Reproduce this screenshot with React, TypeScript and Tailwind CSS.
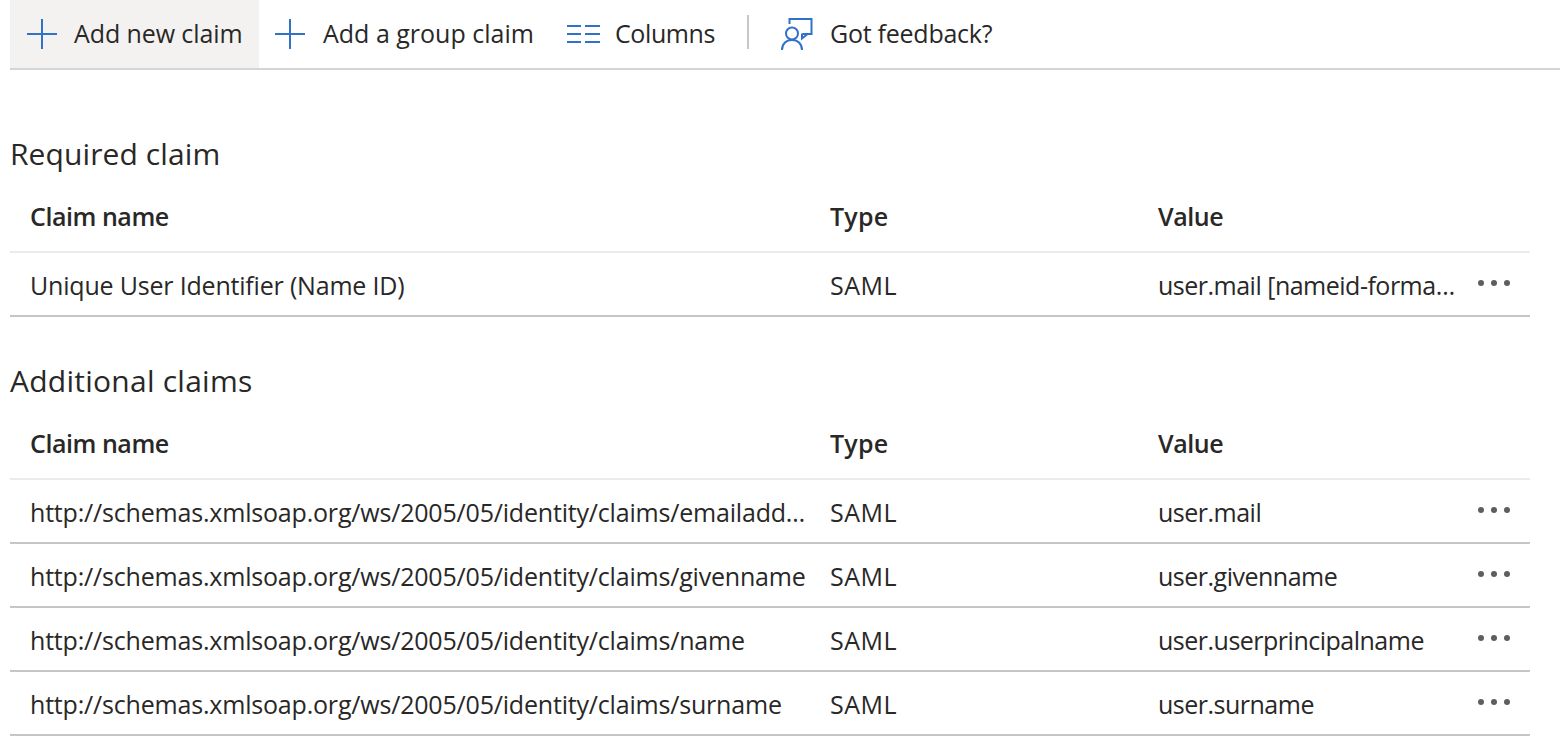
const font = { fontFamily: '"Open Sans", sans-serif' };

function Plus() {
  return (
    <svg width="30" height="30" viewBox="0 0 30 30" className="shrink-0">
      <path d="M0 15h30M15 0v30" stroke="#2f72c8" strokeWidth="2" fill="none" />
    </svg>
  );
}

function ColumnsIcon() {
  return (
    <svg width="33" height="20" viewBox="0 0 33 20" className="shrink-0">
      <path d="M0 2h14M18 2h15M0 10h14M18 10h15M0 18h14M18 18h15" stroke="#2f72c8" strokeWidth="2" fill="none" />
    </svg>
  );
}

function FeedbackIcon() {
  return (
    <svg width="33" height="33" viewBox="0 0 33 33" className="shrink-0">
      <path d="M8.5 6V1h22v15h-9M26 16.5l-5 4v-5" stroke="#2f72c8" strokeWidth="2" fill="none" />
      <circle cx="11" cy="15.5" r="6" stroke="#2f72c8" strokeWidth="2" fill="none" />
      <path d="M1 32c0-6 4-10 10-10s10 4 10 10" stroke="#2f72c8" strokeWidth="2" fill="none" />
    </svg>
  );
}

function More() {
  return (
    <div className="flex gap-[7px] items-center w-[32px] -mt-[6px]">
      <span className="w-[6px] h-[6px] rounded-full bg-[#605e5c]" />
      <span className="w-[6px] h-[6px] rounded-full bg-[#605e5c]" />
      <span className="w-[6px] h-[6px] rounded-full bg-[#605e5c]" />
    </div>
  );
}

function HeaderRow() {
  return (
    <div className="flex items-center h-[79px] pt-[9px] border-b-2 border-[#edebe9] text-[25px] font-semibold tracking-[-0.45px]">
      <div className="w-[820px] pl-5">Claim name</div>
      <div className="w-[328px] tracking-[0.2px]">Type</div>
      <div>Value</div>
    </div>
  );
}

function Row({ name, value }: { name: string; value: string }) {
  return (
    <div className="flex items-center h-[64px] pt-[4px] border-b-2 border-[#c8c6c4] text-[25px]">
      <div className="w-[820px] pl-5">
        <div className="w-[780px] truncate tracking-[-0.19px]">{name}</div>
      </div>
      <div className="w-[328px] tracking-[0.5px]">SAML</div>
      <div className="w-[300px] truncate tracking-[-0.5px]">{value}</div>
      <div className="ml-[20px]"><More /></div>
    </div>
  );
}

function ToolButton({ icon, label, active, className }: { icon: React.ReactNode; label: string; active?: boolean; className: string }) {
  return (
    <div className={`flex items-center h-full ${active ? "bg-[#f3f2f1]" : ""} ${className}`}>
      {icon}
      <span>{label}</span>
    </div>
  );
}

export default function App() {
  return (
    <div className="w-[1560px] h-[750px] bg-white overflow-hidden px-[10px] text-[#292827]" style={font}>
      <div className="w-[1550px] h-[70px] border-b-2 border-[#d6d5d4] flex items-stretch text-[25px]">
        <ToolButton icon={<Plus />} label="Add new claim" active className="w-[249px] pl-[17px] gap-[17px] tracking-[-0.1px]" />
        <ToolButton icon={<Plus />} label="Add a group claim" className="w-[291px] pl-[16px] gap-[18px] tracking-[0px]" />
        <ToolButton icon={<ColumnsIcon />} label="Columns" className="w-[197px] pl-[17px] gap-[15px] tracking-[-0.4px]" />
        <div className="w-[2px] h-[34px] bg-[#c8c6c4] mt-[15px]" />
        <ToolButton icon={<FeedbackIcon />} label="Got feedback?" className="pl-[32px] gap-[16px] tracking-[-0.25px]" />
      </div>
      <div className="w-[1520px]">
        <h2 className="text-[30px] leading-[40px] mt-[64px] tracking-[0.1px]">Required claim</h2>
        <HeaderRow />
        <Row name="Unique User Identifier (Name ID)" value="user.mail [nameid-format:emailAddress]" />
        <h2 className="text-[30px] leading-[40px] mt-[44px] tracking-[0.25px]">Additional claims</h2>
        <HeaderRow />
        <Row name="http://schemas.xmlsoap.org/ws/2005/05/identity/claims/emailaddress" value="user.mail" />
        <Row name="http://schemas.xmlsoap.org/ws/2005/05/identity/claims/givenname" value="user.givenname" />
        <Row name="http://schemas.xmlsoap.org/ws/2005/05/identity/claims/name" value="user.userprincipalname" />
        <Row name="http://schemas.xmlsoap.org/ws/2005/05/identity/claims/surname" value="user.surname" />
      </div>
    </div>
  );
}
